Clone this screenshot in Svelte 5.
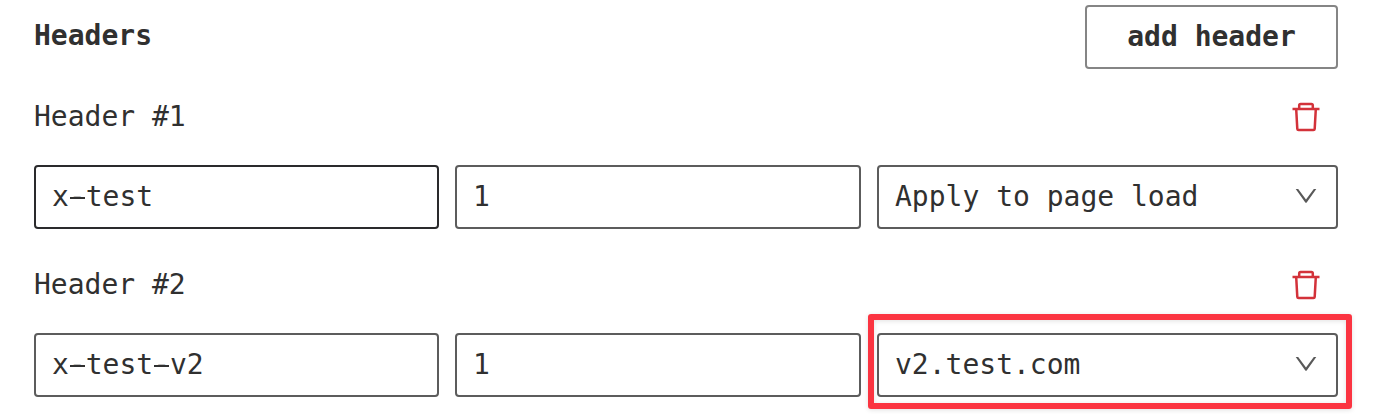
<script>
  const rows = [
    { name: 'x-test', value: '1', scope: 'Apply to page load', active: true },
    { name: 'x-test-v2', value: '1', scope: 'v2.test.com', marked: true }
  ];
</script>

<main>
  <header>
    <h2>Headers</h2>
    <button class="add">add header</button>
  </header>
  {#each rows as row, i}
    <section>
      <div class="title">
        <span>Header #{i + 1}</span>
        <button class="trash" aria-label="Remove header">
          <svg width="28" height="30" viewBox="0 0 28 30" fill="none" stroke="#d3323a" stroke-width="2.5" stroke-linejoin="round">
            <path d="M0.5 7.1H27.5M7.2 7.1V3.4Q7.2 2 8.6 2H19.4Q20.8 2 20.8 3.4V7.1M4.2 7.1L5.3 26.9Q5.4 28.1 6.6 28.1H21.4Q22.6 28.1 22.7 26.9L23.8 7.1" />
          </svg>
        </button>
      </div>
      <div class="fields">
        <div class="box" class:active={row.active}>
          <span>{#each row.name.split('-') as part, p}{#if p}<span class="dash">-</span>{/if}{part}{/each}</span>
        </div>
        <div class="box"><span>{row.value}</span></div>
        <div class="box" class:marked={row.marked}>
          <span>{row.scope}</span>
          <svg width="22" height="16" viewBox="0 0 22 16"><path d="M0.7 1H3.2L11 11.5L18.8 1H21.3L11.7 14.4Q11 15.2 10.3 14.4Z" fill="#595959" /></svg>
        </div>
      </div>
    </section>
  {/each}
</main>

<style>
  :global(body) { background: #fff; }
  main {
    box-sizing: border-box;
    height: 414px;
    padding: 5px 40px 0 34px;
    overflow: hidden;
    font: 28px/36px "DejaVu Sans Mono", monospace;
    color: #303030;
  }
  header, .title { display: flex; justify-content: space-between; }
  header { height: 64px; }
  h2 { margin: 13px 0 0; font: inherit; font-weight: 700; }
  button { margin: 0; padding: 0; background: none; border: 0; font: inherit; color: inherit; }
  .add {
    box-sizing: border-box;
    width: 253px;
    height: 64px;
    border: 2px solid #858585;
    border-radius: 4px;
    font-weight: 700;
  }
  section { height: 168px; }
  .title { height: 96px; align-items: center; padding-right: 18px; }
  .trash, .trash svg { display: block; }
  .fields { display: grid; grid-template-columns: 405px 406px 461px; gap: 16px; }
  .box {
    position: relative;
    box-sizing: border-box;
    display: flex;
    justify-content: space-between;
    align-items: center;
    height: 64px;
    padding: 0 19px 0 16px;
    border: 2px solid #5c5c5c;
    border-radius: 4px;
  }
  .box svg { margin-bottom: 2px; }
  /* Widens the hyphen to almost the full character cell. */
  .dash { background: linear-gradient(#303030, #303030) 1px 17px / 15px 2px no-repeat; }
  .active { border-color: #2a2a2c; }
  .marked::after {
    content: "";
    position: absolute;
    inset: -21px -16px -14px -11px;
    border: 6px solid #fb3441;
    border-radius: 3px;
    box-shadow: 0 1px 5px rgba(0, 0, 0, 0.12), inset 0 1px 5px rgba(0, 0, 0, 0.12);
  }
</style>
